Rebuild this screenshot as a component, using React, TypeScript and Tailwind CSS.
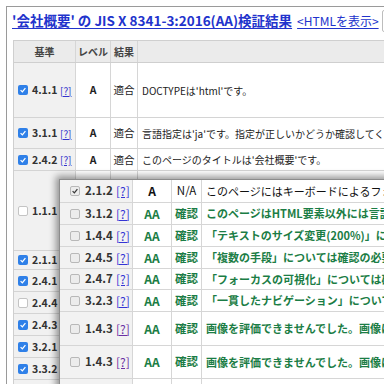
import React from "react";

const FONT = "font-['Noto_Sans_CJK_JP','Noto_Sans_CJK_SC',sans-serif]";

function Check({ on, gray }: { on?: boolean; gray?: boolean }) {
  if (gray) {
    return (
      <span className="w-[10px] h-[10px] shrink-0 rounded-[2px] border border-[#b8b8b8] bg-[#ececec] flex items-center justify-center">
        {on && (
          <svg viewBox="0 0 10 10" className="w-[8px] h-[8px]">
            <path d="M2 5.2 L4.2 7.3 L8 2.6" fill="none" stroke="#3a3a3a" strokeWidth="1.6" />
          </svg>
        )}
      </span>
    );
  }
  if (on) {
    return (
      <span className="w-[10px] h-[10px] shrink-0 rounded-[2px] bg-[#2f80e8] flex items-center justify-center">
        <svg viewBox="0 0 10 10" className="w-[8px] h-[8px]">
          <path d="M2 5.2 L4.2 7.3 L8 2.6" fill="none" stroke="#fff" strokeWidth="1.6" />
        </svg>
      </span>
    );
  }
  return <span className="w-[10px] h-[10px] shrink-0 rounded-[2px] border border-[#c4c4c4] bg-white" />;
}

type BgRow = { id: string; on: boolean; h: string; level?: string; result?: string; text?: string };

const bgRows: BgRow[] = [
  { id: "4.1.1", on: true, h: "h-[55px]", level: "A", result: "適合", text: "DOCTYPEは'html'です。" },
  { id: "3.1.1", on: true, h: "h-[31px]", level: "A", result: "適合", text: "言語指定は'ja'です。指定が正しいかどうか確認してください。" },
  { id: "2.4.2", on: true, h: "h-[22px]", level: "A", result: "適合", text: "このページのタイトルは'会社概要'です。" },
  { id: "1.1.1", on: false, h: "h-[80px]" },
  { id: "2.1.1", on: true, h: "h-[19px]" },
  { id: "2.4.1", on: true, h: "h-[22px]" },
  { id: "2.4.4", on: false, h: "h-[22px]" },
  { id: "2.4.3", on: true, h: "h-[22px]" },
  { id: "3.2.1", on: true, h: "h-[22px]" },
  { id: "3.3.2", on: true, h: "h-[22px]" },
  { id: "", on: false, h: "h-[22px]" },
];

type OvRow = { id: string; h: string; level: string; result: string; text: string; visited?: boolean; first?: boolean };

const ovRows: OvRow[] = [
  { id: "2.1.2", h: "h-[23px]", level: "A", result: "N/A", text: "このページにはキーボードによるフォーカスの移動を妨げる要素はありません。", first: true },
  { id: "3.1.2", h: "h-[22px]", level: "AA", result: "確認", text: "このページはHTML要素以外には言語指定がありません。" },
  { id: "1.4.4", h: "h-[22px]", level: "AA", result: "確認", text: "「テキストのサイズ変更(200%)」については確認が必要です。" },
  { id: "2.4.5", h: "h-[22px]", level: "AA", result: "確認", text: "「複数の手段」については確認の必要があります。" },
  { id: "2.4.7", h: "h-[21px]", level: "AA", result: "確認", text: "「フォーカスの可視化」については確認が必要です。" },
  { id: "3.2.3", h: "h-[22px]", level: "AA", result: "確認", text: "「一貫したナビゲーション」については確認が必要です。" },
  { id: "1.4.3", h: "h-[34px]", level: "AA", result: "確認", text: "画像を評価できませんでした。画像にテキストが含まれていないか確認してください。", visited: true },
  { id: "1.4.3", h: "h-[33px]", level: "AA", result: "確認", text: "画像を評価できませんでした。画像にテキストが含まれていないか確認してください。", visited: true },
  { id: "", h: "h-[30px]", level: "", result: "", text: "" },
];

export default function App() {
  return (
    <div className={`relative w-[384px] h-[384px] overflow-hidden bg-white text-[#222] ${FONT}`}>
      <div className="ml-[6px] mt-[6px] h-[378px] border-l border-t border-[#9a9a9a] pl-[6px]">
        <div className="h-[27px] flex items-center whitespace-nowrap">
          <span className="font-bold text-[13.5px] text-[#2233cc] underline underline-offset-2 -ml-[1px]">
            '会社概要' の JIS X 8341-3:2016(AA)検証結果
          </span>
          <span className="ml-[5px] text-[12px] text-[#2233cc] underline underline-offset-2">&lt;HTMLを表示&gt;</span>
          <span className="ml-[3px] w-[20px] h-[22px] shrink-0 border border-[#bdbdbd] rounded-[2px]" />
        </div>

        <div className="mt-[6px] w-[420px] border-l border-[#cfcfcf]">
          <div className="h-[23px] flex bg-[#ebebeb] border-t border-b border-[#cfcfcf] text-[10px] font-bold text-[#444]">
            <div className="w-[62px] border-r border-[#d6d6d6] flex items-center justify-center">基準</div>
            <div className="w-[35px] border-r border-[#d6d6d6] flex items-center justify-center">レベル</div>
            <div className="w-[27px] border-r border-[#d6d6d6] flex items-center justify-center">結果</div>
            <div className="flex-1" />
          </div>
          {bgRows.map((r, i) => (
            <div key={i} className={`${r.h} flex border-b border-[#d4d4d4] text-[10.5px]`}>
              <div className="w-[62px] border-r border-[#d6d6d6] bg-[#f1f1f1] flex items-center pl-[4px]">
                {r.id && (
                  <>
                    <Check on={r.on} />
                    <span className="ml-[4px] w-[28px] font-bold text-[#333]">{r.id}</span>
                    <span className="text-[#3333cc] underline text-[10px]">[?]</span>
                  </>
                )}
              </div>
              <div className="w-[35px] border-r border-[#d6d6d6] flex items-center justify-center font-bold">{r.level}</div>
              <div className="w-[27px] border-r border-[#d6d6d6] flex items-center justify-center">{r.result}</div>
              <div className="flex-1 flex items-center pl-[4px] whitespace-nowrap overflow-hidden text-[10px]">{r.text}</div>
            </div>
          ))}
        </div>
      </div>

      <div className="absolute left-[59px] top-[179px] w-[340px] h-[220px] bg-white border-l border-t border-[#8c8c8c] shadow-[-3px_-3px_7px_rgba(0,0,0,0.4)]">
        {ovRows.map((r, i) => (
          <div key={i} className={`${r.h} flex border-b border-[#d6d6d6] text-[11.5px]`}>
            <div className="w-[73px] border-r border-[#d6d6d6] bg-[#f2f2f2] flex items-center pl-[10px]">
              {r.id && (
                <>
                  <Check on={r.first} gray />
                  <span className="ml-[5px] w-[31px] font-bold text-[#333] text-[11.5px]">{r.id}</span>
                  <span className={`underline text-[12px] ${r.visited ? "text-[#6a2fa3]" : "text-[#3434d4]"}`}>[?]</span>
                </>
              )}
            </div>
            <div
              className={`w-[39px] border-r border-[#d6d6d6] flex items-center justify-center font-bold text-[12px] ${
                r.first ? "text-[#111]" : "text-[#1b7d45]"
              }`}
            >
              {r.level}
            </div>
            <div
              className={`w-[30px] border-r border-[#d6d6d6] flex items-center justify-center ${
                r.first ? "text-[#111]" : "text-[#1b7d45] font-bold"
              }`}
            >
              {r.result}
            </div>
            <div
              className={`flex-1 flex items-center pl-[4px] whitespace-nowrap overflow-hidden text-[11px] ${
                r.first ? "text-[#111]" : "text-[#1b7d45] font-bold"
              }`}
            >
              {r.text}
            </div>
          </div>
        ))}
      </div>
    </div>
  );
}
